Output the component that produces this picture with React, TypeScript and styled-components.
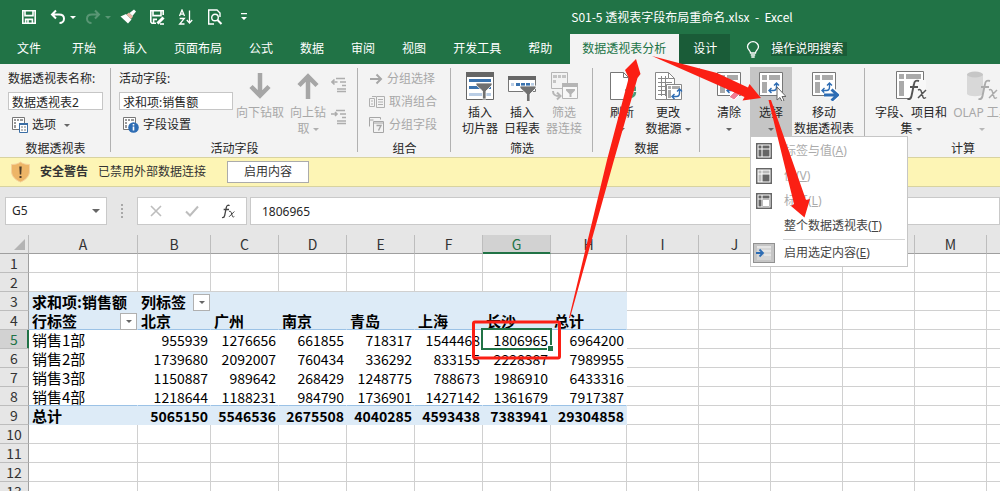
import React from "react";
import styled, { createGlobalStyle, css } from "styled-components";

const GREEN = "#217346";
const uiFont = `"Noto Sans", "Noto Sans CJK SC", sans-serif`;
const gridFont = `"Noto Sans CJK SC", sans-serif`;

const GlobalStyle = createGlobalStyle`
  *, *::before, *::after { box-sizing: border-box; }
  body { margin: 0; background: #fff; }
  button, input { font: inherit; color: inherit; margin: 0; padding: 0; border: 0; background: none; }
  svg { display: block; flex: none; }
`;

const Window = styled.div`
  position: relative;
  display: flex;
  flex-direction: column;
  height: 100vh;
  overflow: hidden;
  font: 12px/16px ${uiFont};
  color: #262626;
`;

/* Title bar */

const TitleBar = styled.header`
  display: flex;
  align-items: center;
  height: 34px;
  flex: none;
  padding-left: 21px;
  background: ${GREEN};
  color: #fff;
`;

const QuickAccess = styled.div`
  display: flex;
  align-items: center;
  gap: 13px;
`;

const QuickButton = styled.button<{ $faded?: boolean }>`
  display: flex;
  align-items: center;
  justify-content: center;
  gap: 4px;
  min-width: 16px;
  opacity: ${(p) => (p.$faded ? 0.25 : 1)};
`;

const SplitButton = styled(QuickButton)`
  margin-right: -4px;
`;

const DocTitle = styled.h1`
  flex: 1;
  margin: 0;
  padding-left: 112px;
  text-align: center;
  font: 12px/16px ${gridFont};
  white-space: pre;
`;

/* Tabs */

const TabBar = styled.nav`
  display: flex;
  align-items: stretch;
  height: 30px;
  flex: none;
  background: ${GREEN};
  color: #fff;
`;

const Tab = styled.button<{ $kind?: "file" | "active" | "context" }>`
  padding: 0 13px 0 14px;
  white-space: nowrap;
  ${(p) => p.$kind === "file" && css`padding: 0 17px;`}
  ${(p) =>
    p.$kind === "active" &&
    css`
      margin-left: 5px;
      padding: 0 13px 0 12px;
      background: #f3f3f3;
      color: ${GREEN};
    `}
  ${(p) => p.$kind === "context" && css`background: #1a5c38;`}
`;

const TellMe = styled.label`
  display: flex;
  align-items: center;
  gap: 11px;
  margin-left: 16px;
`;

const TellMeInput = styled.input`
  width: 76px;
  height: 14px;
  line-height: 14px;
  background: #1a5c38;
  &::placeholder { color: #fff; opacity: 1; }
`;

/* Ribbon */

const Ribbon = styled.section`
  display: flex;
  flex: none;
  height: 93px;
  padding-top: 3px;
  background: #f3f3f3;
`;

const Group = styled.div<{ $width: number; $grow?: boolean }>`
  display: flex;
  flex-direction: column;
  flex: ${(p) => (p.$grow ? 1 : 0)} 0 ${(p) => p.$width}px;
  position: relative;
  &:not(:last-child)::after {
    content: "";
    position: absolute;
    top: 1px;
    right: 0;
    bottom: 5px;
    width: 1px;
    background: #b1b1b1;
  }
`;

const GroupBody = styled.div<{ $pad?: number }>`
  display: flex;
  height: 74px;
  padding-left: ${(p) => p.$pad ?? 0}px;
`;

const GroupLabel = styled.div`
  text-align: center;
  height: 16px;
`;

const Stack = styled.div<{ $width?: number }>`
  display: flex;
  flex-direction: column;
  width: ${(p) => (p.$width ? `${p.$width}px` : "auto")};
`;

const FieldLabel = styled.label`
  height: 22px;
  padding-top: 4px;
  white-space: nowrap;
`;

const FieldInput = styled.input<{ $width: number }>`
  width: ${(p) => p.$width}px;
  height: 18px;
  margin: 3px 0 7px;
  padding: 2px 3px 0;
  border: 1px solid #c6c6c6;
  background: #fff;
  line-height: 16px;
`;

const SmallButton = styled.button<{ $off?: boolean }>`
  display: flex;
  align-items: center;
  gap: 4px;
  height: 16px;
  white-space: nowrap;
  color: ${(p) => (p.$off ? "#a8a8a8" : "#262626")};
`;

const RowList = styled.div`
  display: flex;
  flex-direction: column;
  gap: 7px;
  padding-top: 4px;
`;

const ExpandList = styled.div`
  display: flex;
  flex-direction: column;
  gap: 16px;
  padding: 10px 0 0 2px;
`;

const BigButton = styled.button<{ $width: number; $off?: boolean; $open?: boolean }>`
  display: flex;
  flex-direction: column;
  align-items: center;
  flex: none;
  width: ${(p) => p.$width}px;
  height: 70px;
  white-space: nowrap;
  color: ${(p) => (p.$off ? "#a8a8a8" : "#262626")};
  background: ${(p) => (p.$open ? "#c5c5c5" : "none")};
`;

const IconSlot = styled.span`
  display: flex;
  align-items: center;
  justify-content: center;
  height: 38px;
`;

const Line = styled.span`
  display: flex;
  align-items: center;
  gap: 3px;
  height: 16px;
`;

const MenuAnchor = styled.div`
  position: relative;
`;

const Menu = styled.div`
  position: absolute;
  z-index: 2;
  top: 69px;
  left: 0;
  width: 158px;
  padding: 1px 2px;
  border: 1px solid #c6c6c6;
  background: #fff;
`;

const MenuItem = styled.button<{ $off?: boolean }>`
  display: flex;
  align-items: center;
  gap: 9px;
  width: 100%;
  height: 25px;
  white-space: nowrap;
  color: ${(p) => (p.$off ? "#ababab" : "#444")};
`;

const MenuIcon = styled.span<{ $checked?: boolean }>`
  display: flex;
  align-items: center;
  justify-content: center;
  width: 22px;
  height: 20px;
  ${(p) => p.$checked && css`background: #c5c5c5; border: 1px solid #919191;`}
`;

const MenuRule = styled.hr`
  height: 1px;
  margin: 1px 0 0 30px;
  border: 0;
  background: #d4d4d4;
`;

/* Security bar */

const Warning = styled.section`
  display: flex;
  align-items: center;
  flex: none;
  height: 30px;
  padding-left: 10px;
  border: solid #d8d3a0;
  border-width: 1px 0;
  background: #fdf5b5;
  color: #333;
`;

const WarningTitle = styled.strong`
  margin: 0 10px 0 9px;
`;

const EnableButton = styled.button`
  width: 82px;
  height: 22px;
  margin-left: 21px;
  border: 1px solid #ababab;
  background: #fff;
`;

/* Formula bar */

const FormulaBar = styled.section`
  display: flex;
  flex: none;
  padding: 10px 0 10px 5px;
  background: #e6e6e6;
`;

const barBox = css`
  display: flex;
  align-items: center;
  height: 28px;
  border: 1px solid #c9c9c9;
  background: #fff;
`;

const NameBox = styled.div`
  ${barBox}
  width: 102px;
  padding: 0 6px;
`;

const NameInput = styled.input`
  flex: 1;
  min-width: 0;
`;

const Grip = styled.div`
  display: flex;
  align-items: center;
  justify-content: center;
  width: 30px;
`;

const FxBox = styled.div`
  ${barBox}
  justify-content: space-between;
  width: 110px;
  padding: 0 11px;
  margin-right: 3px;
`;

const FormulaInput = styled.input`
  ${barBox}
  flex: 1;
  min-width: 0;
  padding-left: 11px;
`;

/* Sheet */

const Sheet = styled.main`
  flex: 1;
  min-height: 0;
  overflow: hidden;
  background: #fff;
`;

const Grid = styled.table`
  table-layout: fixed;
  width: 1059px;
  min-width: 100%;
  border-collapse: separate;
  border-spacing: 0;
  font: 14px/18px ${gridFont};
  color: #000;
`;

const head = css<{ $on?: boolean }>`
  height: 19px;
  padding: 0;
  font-weight: 400;
  text-align: center;
  color: ${(p) => (p.$on ? GREEN : "#333")};
  background: ${(p) => (p.$on ? "#d2d2d2" : "#e6e6e6")};
`;

const ColHead = styled.th<{ $on?: boolean }>`
  ${head}
  border-right: 1px solid #bdbdbd;
  border-bottom: 1px solid ${(p) => (p.$on ? GREEN : "#9f9f9f")};
  box-shadow: ${(p) => (p.$on ? `inset 0 -1px ${GREEN}` : "none")};
`;

const Corner = styled.td`
  height: 19px;
  padding: 0 3px 0 0;
  border-right: 1px solid #bdbdbd;
  border-bottom: 1px solid #9f9f9f;
  background: #e6e6e6;
  svg { margin-left: auto; }
`;

const RowHead = styled.th<{ $on?: boolean }>`
  ${head}
  border-right: 1px solid ${(p) => (p.$on ? GREEN : "#9f9f9f")};
  border-bottom: 1px solid #bdbdbd;
  box-shadow: ${(p) => (p.$on ? `inset -1px 0 ${GREEN}` : "none")};
`;

type CellKind = "plain" | "body" | "label" | "total" | "header";

const Cell = styled.td<{ $kind: CellKind; $line?: boolean; $num?: boolean }>`
  position: relative;
  height: 19px;
  padding: 2px 2px 0 3px;
  line-height: 16px;
  white-space: nowrap;
  text-align: ${(p) => (p.$num ? "right" : "left")};
  font-size: ${(p) => (p.$num ? 14 : 15)}px;
  font-weight: ${(p) => (p.$kind === "total" || p.$kind === "header" ? 700 : 400)};
  background: ${(p) => (p.$kind === "total" || p.$kind === "header" ? "#ddebf7" : "#fff")};
  border-right: 1px solid ${(p) => (p.$kind === "plain" ? "#d0d0d0" : "transparent")};
  border-bottom: 1px solid
    ${(p) => (p.$line ? "#9bc2e6" : p.$kind === "plain" ? "#d0d0d0" : "transparent")};
`;

const CellFlex = styled.div`
  display: flex;
  align-items: center;
  justify-content: space-between;
  height: 16px;
  margin-right: -2px;
`;

const FilterButton = styled.button`
  display: flex;
  align-items: center;
  justify-content: center;
  width: 17px;
  height: 17px;
  border: 1px solid #b0b0b0;
  background: #fff;
`;

const Selection = styled.span`
  position: absolute;
  z-index: 1;
  inset: -2px;
  border: 2px solid ${GREEN};
  &::after {
    content: "";
    position: absolute;
    right: -3px;
    bottom: -3px;
    width: 6px;
    height: 6px;
    border: solid #fff;
    border-width: 1px 0 0 1px;
    background: ${GREEN};
  }
`;

const Annotations = styled.svg`
  position: absolute;
  z-index: 3;
  top: 0;
  left: 0;
  pointer-events: none;
`;

/* Icons */

const Caret = ({ color = "#666", w = 6 }: { color?: string; w?: number }) => (
  <svg width={w} height={w / 2} viewBox="0 0 6 3"><path d="M0 0h6L3 3z" fill={color} /></svg>
);

const SaveIcon = () => (
  <svg width="16" height="16" viewBox="0 0 16 16" fill="none" stroke="#fff" strokeWidth="1.6">
    <path d="M1.8 1.8h12.4v12.4H1.8z" /><path d="M4 2v4.6h8V2M4.6 14v-3.6h6.8V14" /><path d="M7 11v3" />
  </svg>
);
const UndoIcon = ({ flip }: { flip?: boolean }) => (
  <svg width="16" height="16" viewBox="0 0 16 16" fill="none" stroke="#fff" strokeWidth="2">
    <g transform={flip ? "matrix(-1 0 0 1 16 0)" : undefined}>
      <path d="M6 1.5 2 5.5l4 4M2.5 5.5H9c3.500 0 5 2 5 4.300S12.200 14 9.500 14" />
    </g>
  </svg>
);
const BrushIcon = () => (
  <svg width="16" height="16" viewBox="0 0 16 16">
    <path d="M.5 7.500 6 5l5.500 5.500-3.500 4z" fill="#fff" /><path d="M6.500 5.500 9 3.500l4 4-2 2.500z" fill="#f2b8a8" />
    <path d="M9.500 4 14 .5 16 2.500 12.500 7z" fill="#fff" />
  </svg>
);
const SaveEditIcon = () => (
  <svg width="16" height="16" viewBox="0 0 16 16" fill="none" stroke="#fff" strokeWidth="1.6">
    <path d="M7 14.200H3L1.800 13V1.800h12.400V6" /><path d="M4 2v4.600h8V2M4.600 14v-3.600H8" />
    <path d="M8.500 14.500l6-6" strokeWidth="3" /><path d="M11 15h4" />
  </svg>
);
const SortIcon = () => (
  <svg width="16" height="16" viewBox="0 0 16 16" fill="none" stroke="#fff" strokeWidth="1.3">
    <path d="M1.500 7 4 1l2.500 6M2.300 5.200h3.400M1.700 9.500h4.600L1.700 15h4.800" /><path d="M11.500 1.500V14M8.800 11l2.700 3 2.700-3" />
  </svg>
);
const PreviewIcon = () => (
  <svg width="16" height="16" viewBox="0 0 16 16" fill="none" stroke="#fff" strokeWidth="1.4">
    <path d="M7 15H1.700V1H10l3 3v4" /><circle cx="8" cy="8.500" r="3.300" /><path d="M10.500 11l4 4" strokeWidth="2" />
  </svg>
);
const CustomizeIcon = () => (
  <svg width="8" height="8" viewBox="0 0 8 8"><path d="M1 0h6v1.300H1zM1 4h6L4 7z" fill="#fff" /></svg>
);
const BulbIcon = () => (
  <svg width="14" height="17" viewBox="0 0 14 17" fill="none" stroke="#fff" strokeWidth="1.300">
    <path d="M4.500 12c0-2.500-3-3.300-3-6.300a5.500 5 0 0 1 11 0c0 3-3 3.800-3 6.300z" /><path d="M4.800 14h4.400M5.300 16h3.400" />
  </svg>
);
const OptionsIcon = ({ info }: { info?: boolean }) => (
  <svg width="16" height="16" viewBox="0 0 16 16" fill="none">
    <path d="M.5.500h12v12H.5z" fill="#fff" stroke="#777" />
    <path d="M2 2h2v2H2zM5 2h2v2H5zM8 2h3v2H8zM2 5h2v2H2zM2 8h2v3H2z" fill="#999" />
    {info ? (
      <g><circle cx="10.500" cy="10.500" r="5.300" fill="#2e6db4" /><path d="M10.500 7v1.500M10.500 9.500v4" stroke="#fff" strokeWidth="1.600" /></g>
    ) : (
      <g><path d="M7.500 6.500h8v9h-8z" fill="#fff" stroke="#3b6ea5" /><path d="M7 6h9v2H7z" fill="#3b6ea5" /><path d="M9 10h2M12 10h2M9 13h2M12 13h2" stroke="#777" /></g>
    )}
  </svg>
);
const BigArrow = ({ up }: { up?: boolean }) => (
  <svg width="22" height="28" viewBox="0 0 22 28" fill="none" stroke="#a6a6a6" strokeWidth="4.500">
    <g transform={up ? "matrix(1 0 0 -1 0 28)" : undefined}><path d="M11 1v23M2 14.500l9 9 9-9" /></g>
  </svg>
);
const ExpandIcon = ({ plus }: { plus?: boolean }) => (
  <svg width="16" height="16" viewBox="0 0 16 16" fill="none" stroke="#adadad" strokeWidth="1.300">
    <path d={plus ? "M1 5h5.500M3.500 2.500 1 5l2.500 2.500" : "M0 5h6M4 3l2 2-2 2"} strokeWidth="1.600" />
    <path d="M5 1.500h9M9 5h6M11 8.500h4M6 12h9M6 14.500h9" />
  </svg>
);
const RightArrowIcon = () => (
  <svg width="14" height="14" viewBox="0 0 14 14" fill="none" stroke="#a6a6a6" strokeWidth="2"><path d="M1 7h10M7.500 2.500 12 7l-4.500 4.500" /></svg>
);
const UngroupIcon = () => (
  <svg width="16" height="14" viewBox="0 0 16 14" fill="none" stroke="#b0b0b0">
    <path d="M.5 3.500h5v8h-5zM7.500 1.500h8v11h-8zM9 4.500h5M9 7h5M9 9.500h5M2 6h2M2 9h2M3 1.500h4" />
  </svg>
);
const GroupFieldIcon = () => (
  <svg width="16" height="16" viewBox="0 0 16 16" fill="none" stroke="#a6a6a6">
    <path d="M.5 9.500v-9h11v2M.5 3h4" /><path d="M4.500 4.500h10v11h-10zM5 6h9" /><path d="M7.500 8.500h4.500l-2.500 5" strokeWidth="1.400" />
  </svg>
);
const Funnel = ({ x, y, c = "#707070" }: { x: number; y: number; c?: string }) => (
  <path transform={`translate(${x} ${y})`} d="M0 0h16v2L10 8v8H6.500V8L0 2z" fill={c} stroke="#fff" strokeWidth=".8" />
);
const SlicerIcon = () => (
  <svg width="30" height="30" viewBox="0 0 30 30">
    <path d="M1.500 1.500h27v27h-27z" fill="#fff" stroke="#666" /><path d="M1 1h28v5H1z" fill="#666" />
    <path d="M4 8h22v3H4zM4 15h22v3H4z" fill="#3b73af" /><path d="M4 22h22v3H4z" fill="#b9cde5" />
    <Funnel x={11} y={12} />
  </svg>
);
const TimelineIcon = () => (
  <svg width="30" height="30" viewBox="0 0 30 30">
    <path d="M1.500 5.500h27v15h-27z" fill="#fff" stroke="#777" /><path d="M1 5h28v4H1z" fill="#666" />
    <path d="M4 12h3v3H4zM24 12h3v3h-3z" fill="#b9cde5" /><path d="M9 12h4v3H9zM14 12h4v3h-4zM19 12h4v3h-4z" fill="#3b73af" />
    <Funnel x={13} y={15} />
  </svg>
);
const FilterLinkIcon = () => (
  <svg width="30" height="30" viewBox="0 0 30 30" fill="none" stroke="#b5b5b5">
    <path d="M2.500 1.500h16v16h-16z" /><path d="M4 4h4v3H4zM9 4h3v3H9zM13 4h4v3h-4zM4 9h3v3H4z" fill="#c4c4c4" stroke="none" />
    <path d="M13.500 12.500h15v15h-15z" fill="#f8f8f8" /><path d="M13 12h16v4H13z" fill="#b5b5b5" stroke="none" />
    <path d="M17 18h9v1.500l-3.500 3.500v3h-2v-3L17 19.500z" fill="#b5b5b5" stroke="none" />
    <path d="M4 20c0 4 2 5 7 5M8 21.500l3.500 3.500L8 28.500" strokeWidth="2" />
  </svg>
);
const RefreshIcon = () => (
  <svg width="30" height="30" viewBox="0 0 30 30" fill="none" stroke="#777">
    <path d="M3.500 1.500h13l5 5v22h-18z" fill="#fff" /><path d="M16.500 1.500v5h5" />
    <path d="M19 24a5 5 0 0 0 9-3M28 19a5 5 0 0 0-9 1" stroke="#4b9b77" strokeWidth="2.500" /><path d="M24 20h5v-5zM23 26h-5v4z" fill="#4b9b77" stroke="none" />
  </svg>
);
const TinySwap = ({ x, y }: { x: number; y: number }) => (
  <g transform={`translate(${x} ${y})`} fill="none" stroke="#2e6db4" strokeWidth="1.400">
    <path d="M1 8.500h4.500c2 0 3-1.500 3-3.500V1M3.500 6 1 8.500 3.500 11M6 3.500 8.500 1 11 3.500" />
  </g>
);
const SourceIcon = () => (
  <svg width="30" height="30" viewBox="0 0 30 30" fill="none" stroke="#888">
    <path d="M2.500 1.500h13l6 6v21h-19z" fill="#fff" /><path d="M15.500 1.500v6h6M5 7.500h10M5 11.500h14M5 15.500h14M5 19.500h9M5 23.500h9M8.500 5v20M12.500 5v20" />
    <path d="M13.500 13.500h15v15h-15z" fill="#fff" /><path d="M15 15h3v3h-3zM19 15h8v3h-8zM15 19h3v8h-3z" fill="#aaa" stroke="none" />
    <TinySwap x={18} y={17} />
  </svg>
);
const PivotIcon = ({ variant }: { variant: "clear" | "select" | "move" }) => (
  <svg width="30" height="30" viewBox="0 0 30 30" fill="none">
    <path d="M3.500 1.500h23v23h-23z" fill="#fff" stroke="#777" />
    <path d="M6 4h5v5H6zM13 4h11v5H13zM6 11h5v11H6z" fill="#aaa" />
    <TinySwap x={12} y={11} />
    {variant === "clear" && <path d="M15 26l8-8 5 3-8 8z" fill="#f07f95" stroke="#fff" />}
    {variant === "select" && <path d="M21 16v13l3-2.500 2 4 2-1-2-4h4z" fill="#fff" stroke="#666" />}
    {variant === "move" && (
      <g>
        <path d="M15 24h14M22.500 18l6.500 6-6.500 6" stroke="#fff" strokeWidth="5" />
        <path d="M15 24h13M22.500 18.500l6 5.500-6 5.500" stroke="#2e6db4" strokeWidth="3" />
      </g>
    )}
  </svg>
);
const Fx = ({ c }: { c: string }) => (
  <g stroke={c} strokeWidth="1.900" fill="none">
    <path d="M26 11c-3-1-4.500 0-5 3l-2.500 12c-.5 2.500-1.500 3.500-4 3M17 17h8" />
    <path d="M25 20c2-1 3 0 3.500 2l1.500 5c.5 1.500 1.500 1.500 3 .5M33 20l-8 8" strokeWidth="1.500" />
  </g>
);
const FieldsIcon = () => (
  <svg width="36" height="32" viewBox="0 0 36 32" fill="none">
    <path d="M3.500 1.500h27v27h-27z" fill="#fff" stroke="#777" />
    <path d="M6 4h5v5H6zM13 4h15v5H13zM6 11h5v15H6z" fill="#aaa" />
    <path d="M20 10h13v20H16z" fill="#f8f8f8" /><Fx c="#555" />
  </svg>
);
const OlapIcon = () => (
  <svg width="36" height="32" viewBox="0 0 36 32" fill="none">
    <path d="M3 4h16v20c-2 3-14 3-16 0z" fill="#d8d8d8" /><ellipse cx="11" cy="4.500" rx="8" ry="3" fill="#c6c6c6" />
    <Fx c="#ababab" />
  </svg>
);
const MenuPivotIcon = ({ v }: { v: "all" | "values" | "labels" }) => (
  <svg width="16" height="16" viewBox="0 0 16 16" fill="none">
    <path d="M.75.750h14.500v14.500H.75z" fill="#fff" stroke="#666" strokeWidth="1.500" />
    <path d="M2.500 2.500h3v3h-3zM6.500 2.500h7v3h-7zM2.500 6.500h3v7h-3z" fill={v === "values" ? "#bbb" : "#666"} />
    <path d="M6.500 6.500h7v7h-7z" fill={v === "labels" ? "#fff" : "#666"} stroke={v === "labels" ? "#bbb" : "none"} />
  </svg>
);
const EnableSelectIcon = () => (
  <svg width="18" height="18" viewBox="0 0 18 18" fill="none">
    <path d="M2 2h14v14H2z" fill="#d6d6d6" /><path d="M2 3h14M6 7h10M9 11h7" stroke="#f4f4f4" />
    <path d="M1 9h7M4.500 5.500 8 9l-3.500 3.500" stroke="#2e6db4" strokeWidth="1.800" />
  </svg>
);
const ShieldIcon = () => (
  <svg width="21" height="22" viewBox="0 0 21 22">
    <path d="M10.500 1C8 3 5 3.500 1.500 3.500V10c0 5.500 4 9 9 11 5-2 9-5.500 9-11V3.500C16 3.500 13 3 10.500 1z" fill="#edb567" stroke="#f5d09a" />
    <path d="M9.300 5.500h2.400l-.5 8H9.800zM9.500 15h2v2h-2z" fill="#4a3a28" />
  </svg>
);

/* Data */

const tabs = ["开始", "插入", "页面布局", "公式", "数据", "审阅", "视图", "开发工具", "帮助"];
const columns = ["A", "B", "C", "D", "E", "F", "G", "H", "I", "J", "K", "L", "M", ""];
const widths = [109, 73, 68, 68, 68, 68, 68, 76, 72, 72, 72, 72, 72];
const pivot: Record<number, string[]> = {
  3: ["求和项:销售额", "列标签", "", "", "", "", "", ""],
  4: ["行标签", "北京", "广州", "南京", "青岛", "上海", "长沙", "总计"],
  5: ["销售1部", "955939", "1276656", "661855", "718317", "1544468", "1806965", "6964200"],
  6: ["销售2部", "1739680", "2092007", "760434", "336292", "833155", "2228387", "7989955"],
  7: ["销售3部", "1150887", "989642", "268429", "1248775", "788673", "1986910", "6433316"],
  8: ["销售4部", "1218644", "1188231", "984790", "1736901", "1427142", "1361679", "7917387"],
  9: ["总计", "5065150", "5546536", "2675508", "4040285", "4593438", "7383941", "29304858"],
};
const rows = Array.from({ length: 13 }, (_, i) => i + 1);

function kindOf(row: number, col: number): CellKind {
  if (col > 7 || row < 3 || row > 9) return "plain";
  if (row < 5) return "header";
  if (row === 9) return "total";
  return col === 0 ? "label" : "body";
}

function GridCell({ row, col }: { row: number; col: number }) {
  const text = col < 8 ? pivot[row]?.[col] ?? "" : "";
  const hasFilter = (row === 3 && col === 1) || (row === 4 && col === 0);
  return (
    <Cell
      $kind={kindOf(row, col)}
      $line={col < 8 && (row === 4 || row === 8)}
      $num={row >= 5 && col > 0}
    >
      {hasFilter ? (
        <CellFlex>
          {text}
          <FilterButton aria-label={`筛选${text}`}><Caret /></FilterButton>
        </CellFlex>
      ) : (
        text
      )}
      {row === 5 && col === 6 && <Selection />}
    </Cell>
  );
}

export default function App() {
  return (
    <Window>
      <GlobalStyle />
      <TitleBar>
        <QuickAccess>
          <QuickButton aria-label="保存"><SaveIcon /></QuickButton>
          <SplitButton aria-label="撤消"><UndoIcon /><Caret color="#fff" /></SplitButton>
          <SplitButton aria-label="恢复" $faded><UndoIcon flip /><Caret color="#fff" /></SplitButton>
          <QuickButton aria-label="格式刷"><BrushIcon /></QuickButton>
          <QuickButton aria-label="另存为"><SaveEditIcon /></QuickButton>
          <QuickButton aria-label="升序排序"><SortIcon /></QuickButton>
          <QuickButton aria-label="打印预览"><PreviewIcon /></QuickButton>
          <QuickButton aria-label="自定义快速访问工具栏"><CustomizeIcon /></QuickButton>
        </QuickAccess>
        <DocTitle>{"S01-5 透视表字段布局重命名.xlsx  -  Excel"}</DocTitle>
      </TitleBar>

      <TabBar>
        <Tab $kind="file">文件</Tab>
        {tabs.map((t) => <Tab key={t}>{t}</Tab>)}
        <Tab $kind="active">数据透视表分析</Tab>
        <Tab $kind="context">设计</Tab>
        <TellMe>
          <BulbIcon />
          <TellMeInput placeholder="操作说明搜索" aria-label="操作说明搜索" />
        </TellMe>
      </TabBar>

      <Ribbon>
        <Group $width={111}>
          <GroupBody $pad={8}>
            <Stack>
              <FieldLabel htmlFor="pivot-name">数据透视表名称:</FieldLabel>
              <FieldInput id="pivot-name" $width={95} defaultValue="数据透视表2" />
              <SmallButton><Stack /><OptionsIcon />选项<Stack /><Caret /></SmallButton>
            </Stack>
          </GroupBody>
          <GroupLabel>数据透视表</GroupLabel>
        </Group>

        <Group $width={247}>
          <GroupBody $pad={8}>
            <Stack $width={114}>
              <FieldLabel htmlFor="active-field">活动字段:</FieldLabel>
              <FieldInput id="active-field" $width={114} defaultValue="求和项:销售额" />
              <SmallButton><Stack /><OptionsIcon info />字段设置</SmallButton>
            </Stack>
            <BigButton $width={54} $off>
              <IconSlot><BigArrow /></IconSlot><Line>向下钻取</Line>
            </BigButton>
            <BigButton $width={42} $off>
              <IconSlot><BigArrow up /></IconSlot><Line>向上钻</Line><Line>取<Caret color="#b0b0b0" /></Line>
            </BigButton>
            <ExpandList>
              <SmallButton aria-label="展开字段" $off><ExpandIcon plus /></SmallButton>
              <SmallButton aria-label="折叠字段" $off><ExpandIcon /></SmallButton>
            </ExpandList>
          </GroupBody>
          <GroupLabel>活动字段</GroupLabel>
        </Group>

        <Group $width={93}>
          <GroupBody $pad={11}>
            <RowList>
              <SmallButton $off><RightArrowIcon />分组选择</SmallButton>
              <SmallButton $off><UngroupIcon />取消组合</SmallButton>
              <SmallButton $off><GroupFieldIcon />分组字段</SmallButton>
            </RowList>
          </GroupBody>
          <GroupLabel>组合</GroupLabel>
        </Group>

        <Group $width={142}>
          <GroupBody $pad={8}>
            <BigButton $width={42}><IconSlot><SlicerIcon /></IconSlot><Line>插入</Line><Line>切片器</Line></BigButton>
            <BigButton $width={42}><IconSlot><TimelineIcon /></IconSlot><Line>插入</Line><Line>日程表</Line></BigButton>
            <BigButton $width={42} $off><IconSlot><FilterLinkIcon /></IconSlot><Line>筛选</Line><Line>器连接</Line></BigButton>
          </GroupBody>
          <GroupLabel>筛选</GroupLabel>
        </Group>

        <Group $width={107}>
          <GroupBody $pad={8}>
            <BigButton $width={42}><IconSlot><RefreshIcon /></IconSlot><Line>刷新</Line><Line><Caret /></Line></BigButton>
            <BigButton $width={50}><IconSlot><SourceIcon /></IconSlot><Line>更改</Line><Line>数据源<Caret /></Line></BigButton>
          </GroupBody>
          <GroupLabel>数据</GroupLabel>
        </Group>

        <Group $width={165}>
          <GroupBody $pad={8}>
            <BigButton $width={42}><IconSlot><PivotIcon variant="clear" /></IconSlot><Line>清除</Line><Line><Caret /></Line></BigButton>
            <MenuAnchor>
              <BigButton $width={42} $open aria-haspopup="menu" aria-expanded="true">
                <IconSlot><PivotIcon variant="select" /></IconSlot><Line>选择</Line><Line><Caret /></Line>
              </BigButton>
              <Menu role="menu">
                <MenuItem role="menuitem" $off><MenuIcon><MenuPivotIcon v="all" /></MenuIcon><span>标签与值(<u>A</u>)</span></MenuItem>
                <MenuItem role="menuitem" $off><MenuIcon><MenuPivotIcon v="values" /></MenuIcon><span>值(<u>V</u>)</span></MenuItem>
                <MenuItem role="menuitem" $off><MenuIcon><MenuPivotIcon v="labels" /></MenuIcon><span>标签(<u>L</u>)</span></MenuItem>
                <MenuItem role="menuitem"><MenuIcon /><span>整个数据透视表(<u>T</u>)</span></MenuItem>
                <MenuRule />
                <MenuItem role="menuitem"><MenuIcon $checked><EnableSelectIcon /></MenuIcon><span>启用选定内容(<u>E</u>)</span></MenuItem>
              </Menu>
            </MenuAnchor>
            <BigButton $width={64}><IconSlot><PivotIcon variant="move" /></IconSlot><Line>移动</Line><Line>数据透视表</Line></BigButton>
          </GroupBody>
        </Group>

        <Group $width={196} $grow>
          <GroupBody $pad={8}>
            <BigButton $width={76}><IconSlot><FieldsIcon /></IconSlot><Line>字段、项目和</Line><Line>集<Caret /></Line></BigButton>
            <BigButton $width={66} $off><IconSlot><OlapIcon /></IconSlot><Line>OLAP 工具</Line><Line><Caret color="#b8b8b8" /></Line></BigButton>
          </GroupBody>
          <GroupLabel>计算</GroupLabel>
        </Group>
      </Ribbon>

      <Warning>
        <ShieldIcon />
        <WarningTitle>安全警告</WarningTitle>
        <span>已禁用外部数据连接</span>
        <EnableButton>启用内容</EnableButton>
      </Warning>

      <FormulaBar>
        <NameBox>
          <NameInput aria-label="名称框" defaultValue="G5" />
          <button aria-label="名称列表"><Caret w={8} /></button>
        </NameBox>
        <Grip>
          <svg width="2" height="14" viewBox="0 0 2 14"><path d="M0 0h2v2H0zM0 4h2v2H0zM0 8h2v2H0zM0 12h2v2H0z" fill="#a8a8a8" /></svg>
        </Grip>
        <FxBox>
          <button aria-label="取消">
            <svg width="14" height="14" viewBox="0 0 14 14"><path d="M2 2l10 10M12 2 2 12" stroke="#bdbdbd" strokeWidth="1.600" /></svg>
          </button>
          <button aria-label="输入">
            <svg width="14" height="14" viewBox="0 0 14 14"><path d="M1 7.500 5 11.500 13 2.500" fill="none" stroke="#bdbdbd" strokeWidth="2" /></svg>
          </button>
          <button aria-label="插入函数">
            <svg width="14" height="15" viewBox="13 9 21 22"><Fx c="#444" /></svg>
          </button>
        </FxBox>
        <FormulaInput aria-label="编辑栏" defaultValue="1806965" />
      </FormulaBar>

      <Sheet>
        <Grid>
          <colgroup>
            <col style={{ width: 29 }} />
            {widths.map((w, i) => <col key={i} style={{ width: w }} />)}
            <col />
          </colgroup>
          <thead>
            <tr>
              <Corner><svg width="11" height="11" viewBox="0 0 11 11"><path d="M11 0v11H0z" fill="#b4b4b4" /></svg></Corner>
              {columns.map((c) => <ColHead key={c} scope="col" $on={c === "G"}>{c}</ColHead>)}
            </tr>
          </thead>
          <tbody>
            {rows.map((r) => (
              <tr key={r}>
                <RowHead scope="row" $on={r === 5}>{r}</RowHead>
                {columns.map((c, i) => <GridCell key={c} row={r} col={i} />)}
              </tr>
            ))}
          </tbody>
        </Grid>
      </Sheet>

      <Annotations width="1000" height="491" viewBox="0 0 1000 491" fill="#fb1f14" aria-hidden="true">
        <rect x="473.500" y="322" width="86" height="36" rx="1.500" fill="none" stroke="#fb1f14" strokeWidth="3" />
        <path d="M569 318 607 160 628.700 78 625 70 636 59 640.500 74 637.500 78 614 160 570 318z" />
        <path d="M652 56 717 73 748 87.500 749.500 84 761 98 742.500 100.500 744.500 97 720 86z" />
        <path d="M768.500 100h2.500L806 200l4-1-5.500 18.500L791 206l3-2z" />
      </Annotations>
    </Window>
  );
}
